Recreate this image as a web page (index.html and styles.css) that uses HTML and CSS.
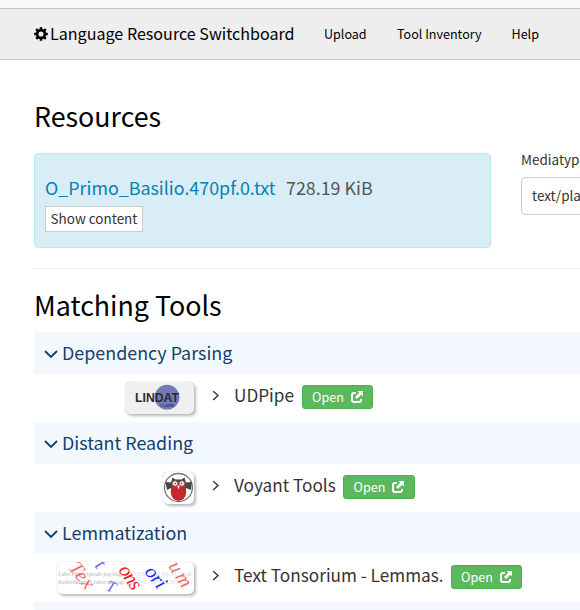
FILE: index.html
```html
<!DOCTYPE html>
<html lang="en">
<head>
<meta charset="utf-8">
<title>Language Resource Switchboard</title>
<link rel="stylesheet" href="styles.css">
</head>
<body>
<svg class="defs" width="0" height="0" aria-hidden="true">
  <symbol id="external" viewBox="0 0 12 12"><path d="M5 2H3Q1 2 1 4v5q0 2 2 2h5q2 0 2-2V8" fill="none" stroke="currentColor" stroke-width="2"/><path d="M6.5 0H12v5.5L10.2 3.8 6 8 4 6l4.2-4.2z" fill="currentColor"/></symbol>
  <symbol id="right" viewBox="0 0 8 12"><path d="M1.2 1.3 6 5.6 1.2 10" fill="none" stroke="currentColor" stroke-width="1.4"/></symbol>
  <symbol id="down" viewBox="0 0 14 10"><path d="M1 2 7 8 13 2" fill="none" stroke="currentColor" stroke-width="1.8"/></symbol>
</svg>
<nav class="navbar">
  <a class="brand"><svg class="gear" viewBox="0 0 14 14"><circle cx="7" cy="7" r="3.9" fill="none" stroke="currentColor" stroke-width="2.7"/><g stroke="currentColor" stroke-width="2.5"><path d="M7 .2v2.4M7 11.4v2.4M.2 7h2.4M11.4 7h2.4M2.2 2.2l1.7 1.7M10.1 10.1l1.7 1.7M2.2 11.8l1.7-1.7M10.1 3.9l1.7-1.7"/></g></svg><span>Language Resource Switchboard</span></a>
  <a class="link upload">Upload</a>
  <a class="link inventory">Tool Inventory</a>
  <a class="link">Help</a>
</nav>
<main class="container">
  <h2 class="title">Resources</h2>
  <div class="resource-row">
    <section class="panel">
      <div class="file"><a class="filename">O_Primo_Basilio.470pf.0.txt</a><span class="size">728.19 KiB</span></div>
      <button class="show">Show content</button>
    </section>
    <div class="media">
      <label class="label">Mediatype</label>
      <div class="select">text/plain</div>
    </div>
  </div>
  <hr class="rule">
  <h2 class="title tools-title">Matching Tools</h2>
  <h3 class="task"><svg class="down"><use href="#down"/></svg>Dependency Parsing</h3>
  <div class="tool">
    <div class="logo-cell"><svg class="logo lindat" viewBox="0 0 69 32"><circle cx="42" cy="15.2" r="12.4" fill="#7379b9"/><text class="lindat-name" x="10" y="20" textLength="44" lengthAdjust="spacingAndGlyphs">LINDAT</text><text class="clarin" x="35" y="24.5" textLength="14">CLARIN</text></svg></div>
    <svg class="right"><use href="#right"/></svg><span class="name n1">UDPipe</span><a class="open">Open<svg class="ext"><use href="#external"/></svg></a>
  </div>
  <h3 class="task"><svg class="down"><use href="#down"/></svg>Distant Reading</h3>
  <div class="tool">
    <div class="logo-cell"><svg class="logo voyant" viewBox="0 0 31 32"><circle cx="15.5" cy="15.5" r="14" fill="#fff" stroke="#777" stroke-width="1.3"/><path d="M2.5 10 8 10.5l1.5-5 3 2h6l3-2 1.5 5 6-.5-1 8-5-2-2 10q-6 4-11 0L8 16l-4 2z" fill="#444"/><ellipse cx="15.5" cy="19.8" rx="7.8" ry="9.2" fill="#c5282f"/><g fill="#eee" stroke="#a44" stroke-width=".8"><circle cx="12" cy="11.5" r="2.7"/><circle cx="19" cy="11.5" r="2.7"/></g><path d="M14.2 13.5h2.6l-1.3 4z" fill="#fff"/><g fill="#555"><circle cx="12.3" cy="11.5" r=".8"/><circle cx="18.7" cy="11.5" r=".8"/></g></svg></div>
    <svg class="right"><use href="#right"/></svg><span class="name n2">Voyant Tools</span><a class="open wide">Open<svg class="ext"><use href="#external"/></svg></a>
  </div>
  <h3 class="task"><svg class="down"><use href="#down"/></svg>Lemmatization</h3>
  <div class="tool">
    <div class="logo-cell"><svg class="logo tonsorium" viewBox="0 0 137 32">
      <g class="script-text"><text x="1" y="14" textLength="64">I den Hove vjorde jeg mig</text><text x="1" y="22" textLength="66">Kebenhavns Universitet og</text></g>
      <g class="print-text"><text x="71" y="14" textLength="64">H VERSION MLXL NOR</text><text x="71" y="22" textLength="64">(CON LARS MCMXCIX)</text></g>
      <g class="letters"><text class="red pale" transform="translate(11 6) rotate(52)" textLength="29">Tex</text><text class="blue pale" transform="translate(37 4) rotate(50)">t</text><text class="blue pale" transform="translate(48 28) rotate(22)" font-size="16">T</text><text class="red" transform="translate(61 8) rotate(56)" textLength="26">ons</text><text class="blue" transform="translate(87 10) rotate(52)" textLength="23">ori</text><text class="red pale" transform="translate(111 4) rotate(58)" textLength="27">um</text></g>
    </svg></div>
    <svg class="right"><use href="#right"/></svg><span class="name n3">Text Tonsorium - Lemmas.</span><a class="open">Open<svg class="ext"><use href="#external"/></svg></a>
  </div>
  <div class="task next"></div>
</main>
</body>
</html>
```

FILE: styles.css
```css
* { box-sizing: border-box; }
body { margin: 0; height: 610px; overflow: hidden; background: #fff; color: #333; font-family: "Noto Sans CJK SC", sans-serif; font-size: 14px; }
body::before { content: ""; display: block; height: 8px; background: #fafafa; }
.defs { display: block; width: 0; height: 0; }
.navbar { display: flex; align-items: center; height: 52px; padding: 0 0 2px 34px; background: #eee; border-top: 1px solid #c8c8c8; border-bottom: 1px solid #ccc; color: #000; white-space: nowrap; }
.brand { display: flex; align-items: center; width: 290px; font-size: 16.1px; }
.gear { width: 14px; height: 14px; margin: 1px 2px 0 0; }
.link { font-size: 12.55px; }
.upload { width: 73px; }
.inventory { width: 114.5px; }
.container { width: 580px; height: 550px; overflow: hidden; padding-left: 34px; }
.title { margin: 0; padding-top: 36px; height: 93px; color: #000; font-size: 26.8px; font-weight: 400; line-height: 40px; }
.resource-row { display: flex; gap: 30px; height: 95px; }
.panel { flex: none; width: 457px; padding: 20px 10px; background: #d9edf7; border: 1px solid #bce8f1; border-radius: 4px; }
.file { display: flex; gap: 10.5px; height: 32px; font-size: 17.87px; line-height: 27px; white-space: nowrap; }
.filename { color: #0482b2; }
.size { color: #555; }
.show { display: block; width: 98px; height: 26px; padding: 0 0 2px; border: 1px solid #ccc; background: #fff; color: #333; font: 13.5px/22px "Noto Sans CJK SC", sans-serif; white-space: nowrap; }
.media { flex: none; width: 59px; white-space: nowrap; }
.label { display: block; height: 24px; font-size: 13.5px; line-height: 13px; }
.select { width: 200px; height: 38px; padding-left: 10px; border: 1px solid #ccc; border-radius: 4px; font-size: 13.5px; line-height: 35px; }
.rule { margin: 20px 0 0; border: 0; border-top: 1px solid #eee; }
.tools-title { padding-top: 16px; height: 63px; }
.task { display: flex; align-items: center; height: 42px; margin: 0; padding-left: 10px; background: #f3f8fe; color: #11406f; font-size: 17.9px; font-weight: 400; line-height: 40px; padding-bottom: 2px; }
.next { height: 8px; }
.down { width: 14px; height: 10px; margin: 3px 4px 0 0; }
.tool { display: flex; height: 48px; align-items: flex-start; }
.logo-cell { display: flex; justify-content: flex-end; width: 161px; padding: 8px 1px 0 0; }
.logo { height: 32px; border-radius: 5px; box-shadow: 0 0 1px #aaa, 2px 2px 3px #bbb; background: #fff; }
.lindat { width: 69px; background: #f0f0f0; }
.voyant { width: 31px; }
.tonsorium { width: 137px; }
.right { width: 8px; height: 12px; margin: 16px 14px 0 17px; color: #333; }
.name { font-size: 17.2px; line-height: 41px; white-space: nowrap; }
.n1 { width: 68px; }
.n2 { width: 109px; }
.n3 { width: 217px; }
.open { display: flex; align-items: center; justify-content: center; gap: 7px; width: 71px; height: 24px; margin-top: 11px; background: #5cb85c; border: 1px solid #4cae4c; border-radius: 3px; color: #fff; font-size: 12.6px; line-height: 22px; }
.wide { width: 72px; }
.ext { width: 12px; height: 12px; }
.lindat-name { font: bold 13px "Liberation Sans", sans-serif; fill: #292b32; }
.clarin { font: bold 4px "Liberation Sans", sans-serif; fill: #3d426b; }
.script-text { font: italic 7px "Liberation Serif", serif; fill: #bbb; }
.print-text { font: 6px "Liberation Serif", serif; fill: #ddd; }
.letters { font: italic 20px "Liberation Serif", serif; }
.red { fill: #f01820; }
.blue { fill: #2424ee; }
.pale { opacity: .65; }
```
